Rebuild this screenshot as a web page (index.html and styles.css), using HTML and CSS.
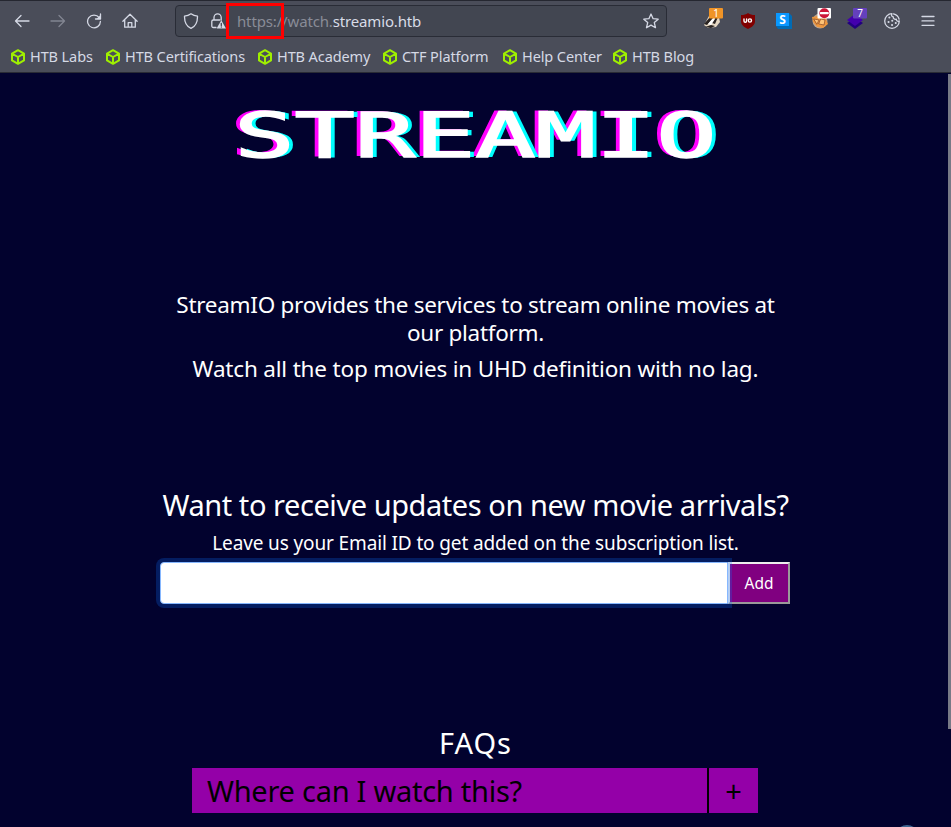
FILE: index.html
```html
<!DOCTYPE html>
<html lang="en">
<head>
<meta charset="utf-8">
<title>Streamio</title>
<link rel="stylesheet" href="styles.css">
</head>
<body>
<svg width="0" height="0" class="defs"><defs>
<symbol id="cube" viewBox="0 0 16 16"><path d="M8 1.2 14 4.6V11.4L8 14.8 2 11.4V4.6ZM2.3 4.8 8 8 13.7 4.8M8 8V14.6" fill="none" stroke="#9fef00" stroke-width="2" stroke-linejoin="round"/></symbol>
</defs></svg>
<header class="browser">
  <div class="toolbar">
    <nav class="controls">
      <svg viewBox="0 0 16 16"><path d="M15 8H1.5M7 2.5 1.5 8 7 13.5"/></svg>
      <svg viewBox="0 0 16 16" class="dim"><path d="M1 8h13.5M9 2.5 14.5 8 9 13.5"/></svg>
      <svg viewBox="0 0 16 16"><path d="M13.2 4.7A6.4 6.4 0 1 0 14.4 8.5M14.5 1v5H9.5"/><path d="M14.5 2v4h-4z" class="solid"/></svg>
      <svg viewBox="0 0 16 16"><path d="M.9 8.2 8 1.2l7.1 7M2.7 7v7.2h10.6V7M6.2 14V9.7h3.6V14"/></svg>
    </nav>
    <div class="urlbar">
      <svg viewBox="0 0 16 16"><path d="M8 .8c2 1.5 4 2.2 6.5 2.4C14.6 8.500 13 13 8 15.300 3 13 1.400 8.500 1.500 3.200 4 3 6 2.300 8 .8z"/></svg>
      <svg viewBox="0 0 16 16" class="lock"><path d="M4 7V4.500a3.600 3.600 0 0 1 7.200 0V7M6 14.500H3.300A1.500 1.500 0 0 1 1.800 13V8.500A1.500 1.500 0 0 1 3.300 7h6.500"/><path class="solid" d="M11.300 7.300 16 15.500H6.600z"/><path class="mark" d="M11.300 10.300v2.100M11.300 14v.1"/></svg>
      <div class="address"><span class="scheme">https://watch.</span>streamio.htb<i class="highlight"></i></div>
      <svg viewBox="0 0 16 16" class="star"><path d="m8 1 2.100 4.700 5.100.5-3.900 3.400 1.200 5.100L8 12.100l-4.500 2.600 1.200-5.100L.8 6.200l5.100-.5z"/></svg>
    </div>
    <div class="extensions">
      <svg viewBox="0 0 22 24"><path d="M3 18 8 9l9-3 2 9-4 5-8 1z" fill="#e6d8c4"/><path d="m3 17 7-8 3 1-7 8zM11 16l4-7 2 1-3 7zM4 20l6-2 4 1-4 2z" fill="#292321"/><path d="m7 17 6-7 1 2-4 6z" fill="#fff"/><rect x="8" y="1" width="14" height="10.500" rx="1" fill="#f09427"/><text x="15" y="10" class="badge">1</text></svg>
      <svg viewBox="0 0 22 24"><path d="M11 6c2 1.500 4 2 7 2v6c0 4-3 6-7 8-4-2-7-4-7-8V8c3 0 5-.5 7-2z" fill="#800000"/><path d="M7 12v2a1.300 1.300 0 0 0 2.600 0v-2" fill="none" stroke="#fff" stroke-width="1.400"/><circle cx="12.900" cy="13.500" r="1.600" fill="none" stroke="#fff" stroke-width="1.400"/></svg>
      <svg viewBox="0 0 22 24"><path d="m3 19 2 3h14V9l-3-3z" fill="#006bb5"/><rect x="3" y="6" width="13" height="13" fill="#0a98ff"/><text x="9.500" y="17" class="s-mark">S</text></svg>
      <svg viewBox="0 0 22 24"><circle cx="11" cy="14" r="7.500" fill="#b9a596"/><path d="m3 10 6-1 8 3 2 5-5 4-6-1-4-5z" fill="#ee973e"/><path d="m5 12 5 1-2 4zM12 12l4 1-1 5-5-1z" fill="#ffc478" stroke="#864929" stroke-width=".7"/><rect x="8.500" y="1" width="13.500" height="10.500" rx="1" fill="#fff"/><circle cx="15.300" cy="6.200" r="5" fill="#cd1638"/><path d="M11.800 6.200h7" stroke="#fff" stroke-width="2.200"/></svg>
      <svg viewBox="0 0 22 24"><path d="m2 16 8-5 8 5-8 6z" fill="#220080"/><path d="m2 13 8-6 8 6-8 6z" fill="#4300ad"/><rect x="8" y="1" width="14" height="10.500" rx="1" fill="#6440bd"/><text x="15" y="10" class="badge">7</text></svg>
      <svg viewBox="0 0 22 24" class="line"><path d="M11 6.700a7.300 7.300 0 1 0 7.300 7.300c-1.800.7-3-.2-3-1.800-2 .4-3.300-.6-3-2.400-1.700-.2-2.200-1.500-1.300-3.100z"/><path d="M12.500 6.800a7.300 7.300 0 0 1 5.600 5.400"/><path class="chips" d="M8.300 10.500h.1M7.500 15h.1M11.200 13.700h.1M11 18h.1M14.700 16h.1"/></svg>
      <svg viewBox="0 0 22 24" class="line"><path d="M5 9.500h12M5 13.900h12M5 18.300h12"/></svg>
    </div>
  </div>
  <nav class="bookmarks">
    <a><svg><use href="#cube"/></svg><span>HTB Labs</span></a>
    <a><svg><use href="#cube"/></svg><span>HTB Certifications</span></a>
    <a><svg><use href="#cube"/></svg><span>HTB Academy</span></a>
    <a><svg><use href="#cube"/></svg><span>CTF Platform</span></a>
    <a><svg><use href="#cube"/></svg><span>Help Center</span></a>
    <a><svg><use href="#cube"/></svg><span>HTB Blog</span></a>
  </nav>
</header>
<main class="page">
  <h1 class="logo"><span>STREAMIO</span></h1>
  <section class="intro">
    <p class="lead">StreamIO provides the services to stream online movies at<br>our platform.</p>
    <p class="tagline">Watch all the top movies in UHD definition with no lag.</p>
  </section>
  <section class="subscribe">
    <h2>Want to receive updates on new movie arrivals?</h2>
    <p>Leave us your Email ID to get added on the subscription list.</p>
    <form class="form"><input type="email" aria-label="Email"><button type="button">Add</button></form>
  </section>
  <section class="faq">
    <h2>FAQs</h2>
    <div class="question"><span class="q">Where can I watch this?</span><span class="plus">+</span></div>
  </section>
  <i class="scrollbar"></i>
  <i class="bubble"></i>
</main>
</body>
</html>
```
FILE: styles.css
```css
* { box-sizing: border-box; }
body {
  margin: 0;
  height: 827px;
  overflow: hidden;
  background: #02022e;
  color: #fff;
  font-family: "Noto Sans", sans-serif;
}
h1, h2, p { margin: 0; font-weight: 400; white-space: nowrap; }
.defs { display: block; }

.browser {
  height: 73px;
  background: #4a4d59;
  border-top: 1px solid #252730;
  border-bottom: 1px solid #292b35;
}
.toolbar { height: 40px; display: flex; align-items: center; }
.toolbar svg { fill: none; stroke: #d5d9e5; stroke-width: 1.3; stroke-linecap: round; stroke-linejoin: round; flex: none; }
.toolbar .solid { fill: #d5d9e5; stroke: none; }
.toolbar .mark { stroke: #424651; }
.toolbar .chips { stroke-width: 2; }
.controls { width: 175px; padding-left: 14px; display: flex; gap: 20px; }
.controls svg { width: 16px; height: 16px; }
.controls .dim { opacity: .4; }
.urlbar {
  width: 492px;
  height: 32px;
  border: 1px solid #292c36;
  border-radius: 4px;
  background: #424651;
  display: flex;
  align-items: center;
  padding: 0 7px;
}
.urlbar svg { width: 16px; height: 16px; }
.urlbar .lock { margin-left: 11px; }
.address {
  position: relative;
  margin-left: 11px;
  flex: 1;
  font-size: 15px;
  line-height: 30px;
  letter-spacing: -.15px;
  color: #d8dce7;
  white-space: nowrap;
}
.scheme { color: #898c97; }
.highlight { position: absolute; left: -11px; top: -3px; width: 58px; height: 36px; border: 3px solid #f00; }
.extensions { flex: 1; display: flex; gap: 14px; padding-left: 34px; }
.extensions svg { width: 22px; height: 24px; stroke: none; margin-top: -4px; }
.extensions .line { stroke: #d5d9e5; margin-top: -4px; }
.badge { font-size: 10px; fill: #fff; text-anchor: middle; }
.s-mark { font: bold 12px "Noto Sans", sans-serif; fill: #fff; text-anchor: middle; }

.bookmarks {
  display: grid;
  grid-template-columns: 95px 152px 125px 120px 110px 90px;
  padding-left: 10px;
  font-size: 14.500px;
  line-height: 31px;
  letter-spacing: -.1px;
  color: #d5d9e5;
}
.bookmarks a { display: flex; align-items: center; white-space: nowrap; }
.bookmarks svg { width: 16px; height: 16px; margin-right: 4px; flex: none; }

.page { position: relative; height: 754px; overflow: hidden; text-align: center; }
.logo {
  height: 216px;
  padding-top: 25px;
  font: 400 62px/76px "DejaVu Sans Mono", monospace;
}
.logo span {
  display: inline-block;
  transform: scaleX(1.615);
  -webkit-text-stroke: 1.500px #fff;
  text-shadow: 3.100px 0 #0ff, -3.100px -1px #f0f;
}
.intro { height: 196px; font-size: 22.500px; line-height: 28px; }
.lead { padding-top: 2px; letter-spacing: -.28px; }
.tagline { margin-top: 8px; letter-spacing: -.18px; }
.subscribe { height: 236px; }
.subscribe h2 { font-size: 29px; line-height: 38px; padding-top: 1px; letter-spacing: -.44px; }
.subscribe p { font-size: 19px; line-height: 24px; margin-top: 7px; letter-spacing: -.13px; }
.form { display: flex; width: 630px; margin: 7px 0 0 160px; }
.form input {
  width: 568px;
  height: 42px;
  border: 1px solid #86b7fe;
  border-radius: 4px 0 0 4px;
  background: #fff;
  box-shadow: 0 0 0 4px rgba(13, 110, 253, .25);
  outline: 0;
  z-index: 1;
}
.form button {
  width: 62px;
  height: 42px;
  padding: 0;
  border: 2px outset #eee;
  background: #800080;
  color: #fff;
  font: 15.500px "Noto Sans", sans-serif;
}
.faq h2 { font-size: 29px; line-height: 38px; padding-top: 3px; letter-spacing: 1px; }
.question { display: flex; width: 566px; height: 45px; margin: 6px 0 0 192px; color: #000; font-size: 29px; line-height: 46px; letter-spacing: -.26px; background: #9400a8; }
.q { width: 517px; border-right: 2px solid #000; padding-left: 15px; text-align: left; }
.plus { flex: 1; }
.scrollbar { position: absolute; right: 0; top: 1px; width: 3px; height: 655px; background: #777986; }
.bubble { position: absolute; left: 895px; top: 752px; width: 24px; height: 24px; border-radius: 50%; background: #3f6591; }
```
